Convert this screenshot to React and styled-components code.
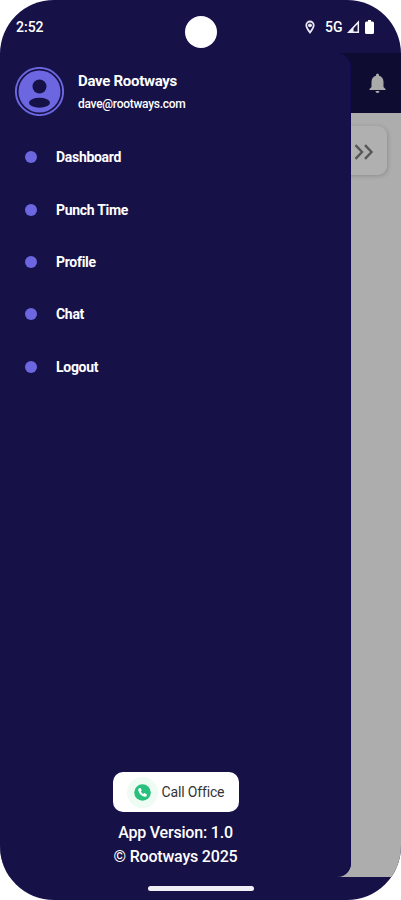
import React from "react";
import styled, { createGlobalStyle } from "styled-components";

const NAVY = "#161248";
const VIOLET = "#6c66e0";

const GlobalStyle = createGlobalStyle`
	* {
		box-sizing: border-box;
	}

	body {
		margin: 0;
		background: #fff;
		font-family: Roboto, "Liberation Sans", sans-serif;
	}
`;

const Phone = styled.div`
	width: 401px;
	height: 900px;
	background: ${NAVY};
	border-radius: 54px;
	overflow: hidden;
	display: flex;
	flex-direction: column;
	color: #fff;
`;

const StatusBar = styled.header`
	position: relative;
	height: 53px;
	flex: none;
	display: flex;
	justify-content: space-between;
	align-items: flex-start;
	padding: 18px 27px 0 16px;
`;

const Clock = styled.span`
	font-size: 14px;
	line-height: 18px;
	font-weight: 500;
`;

const Camera = styled.div`
	position: absolute;
	left: 185px;
	top: 16px;
	width: 32px;
	height: 32px;
	border-radius: 50%;
	background: #fff;
`;

const StatusIcons = styled.div`
	display: flex;
	align-items: center;
	height: 18px;
`;

const Network = styled.span`
	font-size: 14px;
	font-weight: 500;
	margin: 0 4px 0 10px;
	width: 18px;
`;

const Body = styled.div`
	position: relative;
	height: 824px;
	flex: none;
	background: #adadad;
	display: flex;
	flex-direction: column;
	align-items: flex-end;
`;

const AppBar = styled.div`
	width: 100%;
	height: 60px;
	background: #0f0c32;
	display: flex;
	justify-content: flex-end;
	align-items: center;
	padding-right: 15px;
`;

const PunchCard = styled.div`
	width: 372px;
	height: 49px;
	margin: 13px 14px 0 0;
	border-radius: 9px;
	background: #b0b0b0;
	box-shadow: 1px 1px 4px rgba(0, 0, 0, .18);
	display: flex;
	justify-content: flex-end;
	align-items: center;
	padding: 2px 13px 0 0;
`;

const Drawer = styled.aside`
	position: absolute;
	left: 0;
	top: 0;
	width: 351px;
	height: 824px;
	background: ${NAVY};
	border-radius: 0 14px 14px 0;
	box-shadow: inset -1px 0 0 #100b50;
	display: flex;
	flex-direction: column;
`;

const User = styled.div`
	display: flex;
	padding: 14px 0 0 15px;
	height: 78px;
`;

const UserText = styled.div`
	padding: 3px 0 0 14px;
`;

const Name = styled.div`
	font-size: 15px;
	line-height: 22px;
	font-weight: 700;
	letter-spacing: -.3px;
`;

const Email = styled.div`
	font-size: 12px;
	line-height: 24px;
	font-weight: 500;
	letter-spacing: -.27px;
`;

const Menu = styled.nav`
	display: flex;
	flex-direction: column;
`;

const MenuItem = styled.a`
	height: 52.4px;
	display: flex;
	align-items: center;
	padding-left: 25px;
	font-size: 14px;
	font-weight: 700;
	letter-spacing: -.3px;
`;

const Dot = styled.span`
	width: 12px;
	height: 12px;
	border-radius: 50%;
	background: ${VIOLET};
	margin-right: 19px;
`;

const Footer = styled.footer`
	margin-top: auto;
	display: flex;
	flex-direction: column;
	align-items: center;
	padding-bottom: 8px;
	font-size: 16px;
	font-weight: 500;
	line-height: 24px;
	letter-spacing: -.2px;
`;

const CallButton = styled.button`
	width: 126px;
	height: 40px;
	border: 0;
	border-radius: 10px;
	background: #fff;
	color: #333;
	font: 400 14px Roboto, "Liberation Sans", sans-serif;
	letter-spacing: -.15px;
	display: flex;
	align-items: center;
	padding: 0 0 0 14px;
	margin-bottom: 9px;
`;

const CallBadge = styled.span`
	width: 31px;
	height: 31px;
	border-radius: 50%;
	background: #eefcf3;
	display: flex;
	align-items: center;
	justify-content: center;
	margin-right: 4px;
`;

const HomeBar = styled.div`
	width: 106px;
	height: 5px;
	border-radius: 3px;
	background: #f1f0f6;
	margin: 9px auto 0;
`;

const items = ["Dashboard", "Punch Time", "Profile", "Chat", "Logout"];

const PinIcon = () => (
  <svg width="10" height="14" viewBox="0 0 10 14">
    <path d="M5 1.500a3.700 3.700 0 0 0-3.700 3.700C1.300 7.700 5 12.500 5 12.500s3.700-4.800 3.700-7.300A3.700 3.700 0 0 0 5 1.500z" fill="none" stroke="#e9e8f2" strokeWidth="1.800" />
    <circle cx="5" cy="5.300" r="1.900" fill="#e9e8f2" />
  </svg>
);

const SignalIcon = () => (
  <svg width="13" height="14" viewBox="0 0 13 14">
    <path d="M1.700 12.300L11.300 2.200v10.100z" fill="none" stroke="#f1f0f6" strokeWidth="1.500" />
    <path d="M1.700 12.300L6.500 7.300v5z" fill="#f1f0f6" />
  </svg>
);

const BatteryIcon = styled(({ className }) => (
  <svg className={className} width="9" height="14" viewBox="0 0 9 14">
    <path d="M3 0h3v1.500h1.500Q9 1.500 9 3v9.500Q9 14 7.500 14h-6Q0 14 0 12.500V3q0-1.500 1.500-1.500H3z" fill="#fff" />
  </svg>
))`
	margin-left: 5px;
`;

const Avatar = () => (
  <svg width="49" height="49" viewBox="0 0 49 49">
    <circle cx="24.500" cy="24.500" r="23.600" fill="none" stroke={VIOLET} strokeWidth="1.900" />
    <circle cx="24.500" cy="24.500" r="21" fill={VIOLET} />
    <circle cx="24.500" cy="19.500" r="7" fill={NAVY} />
    <ellipse cx="24.500" cy="35.700" rx="10.500" ry="5" fill={NAVY} />
  </svg>
);

const BellIcon = () => (
  <svg width="17" height="20" viewBox="0 0 16 20">
    <path d="M8 20a2 2 0 0 0 2-2H6a2 2 0 0 0 2 2zm6-6V9c0-3.100-1.600-5.600-4.500-6.300V2a1.500 1.500 0 0 0-3 0v.7C3.600 3.400 2 5.900 2 9v5l-2 2v1h16v-1z" fill="#aaa" />
  </svg>
);

const ChevronsIcon = () => (
  <svg width="20" height="16" viewBox="0 0 20 16">
    <path d="M1.500 1.200L8 8l-6.500 6.800M11 1.200L17.500 8 11 14.800" fill="none" stroke="#575757" strokeWidth="2.400" />
  </svg>
);

const PhoneIcon = () => (
  <svg width="17" height="17" viewBox="0 0 17 17">
    <circle cx="8.500" cy="8.500" r="8.300" fill="#27c17d" />
    <path d="M5.100 4.300l1.500-.2 1.200 2.500-.9 1c.6 1.100 1.300 1.800 2.400 2.400l1-.9 2.500 1.200-.2 1.600c-.2.700-.8.900-1.500.8-3.700-.4-6.300-3.100-6.800-6.700-.1-.8.100-1.400.8-1.700z" fill="#fff" />
  </svg>
);

const App = () => {
  return (
    <>
      <GlobalStyle />
      <Phone>
        <StatusBar>
          <Clock>2:52</Clock>
          <Camera />
          <StatusIcons>
            <PinIcon />
            <Network>5G</Network>
            <SignalIcon />
            <BatteryIcon />
          </StatusIcons>
        </StatusBar>
        <Body>
          <AppBar>
            <BellIcon />
          </AppBar>
          <PunchCard>
            <ChevronsIcon />
          </PunchCard>
          <Drawer>
            <User>
              <Avatar />
              <UserText>
                <Name>Dave Rootways</Name>
                <Email>dave@rootways.com</Email>
              </UserText>
            </User>
            <Menu>
              {items.map((item) => (
                <MenuItem key={item}>
                  <Dot />
                  {item}
                </MenuItem>
              ))}
            </Menu>
            <Footer>
              <CallButton>
                <CallBadge>
                  <PhoneIcon />
                </CallBadge>
                Call Office
              </CallButton>
              <div>App Version: 1.0</div>
              <div>© Rootways 2025</div>
            </Footer>
          </Drawer>
        </Body>
        <HomeBar />
      </Phone>
    </>
  );
};

export default App;
